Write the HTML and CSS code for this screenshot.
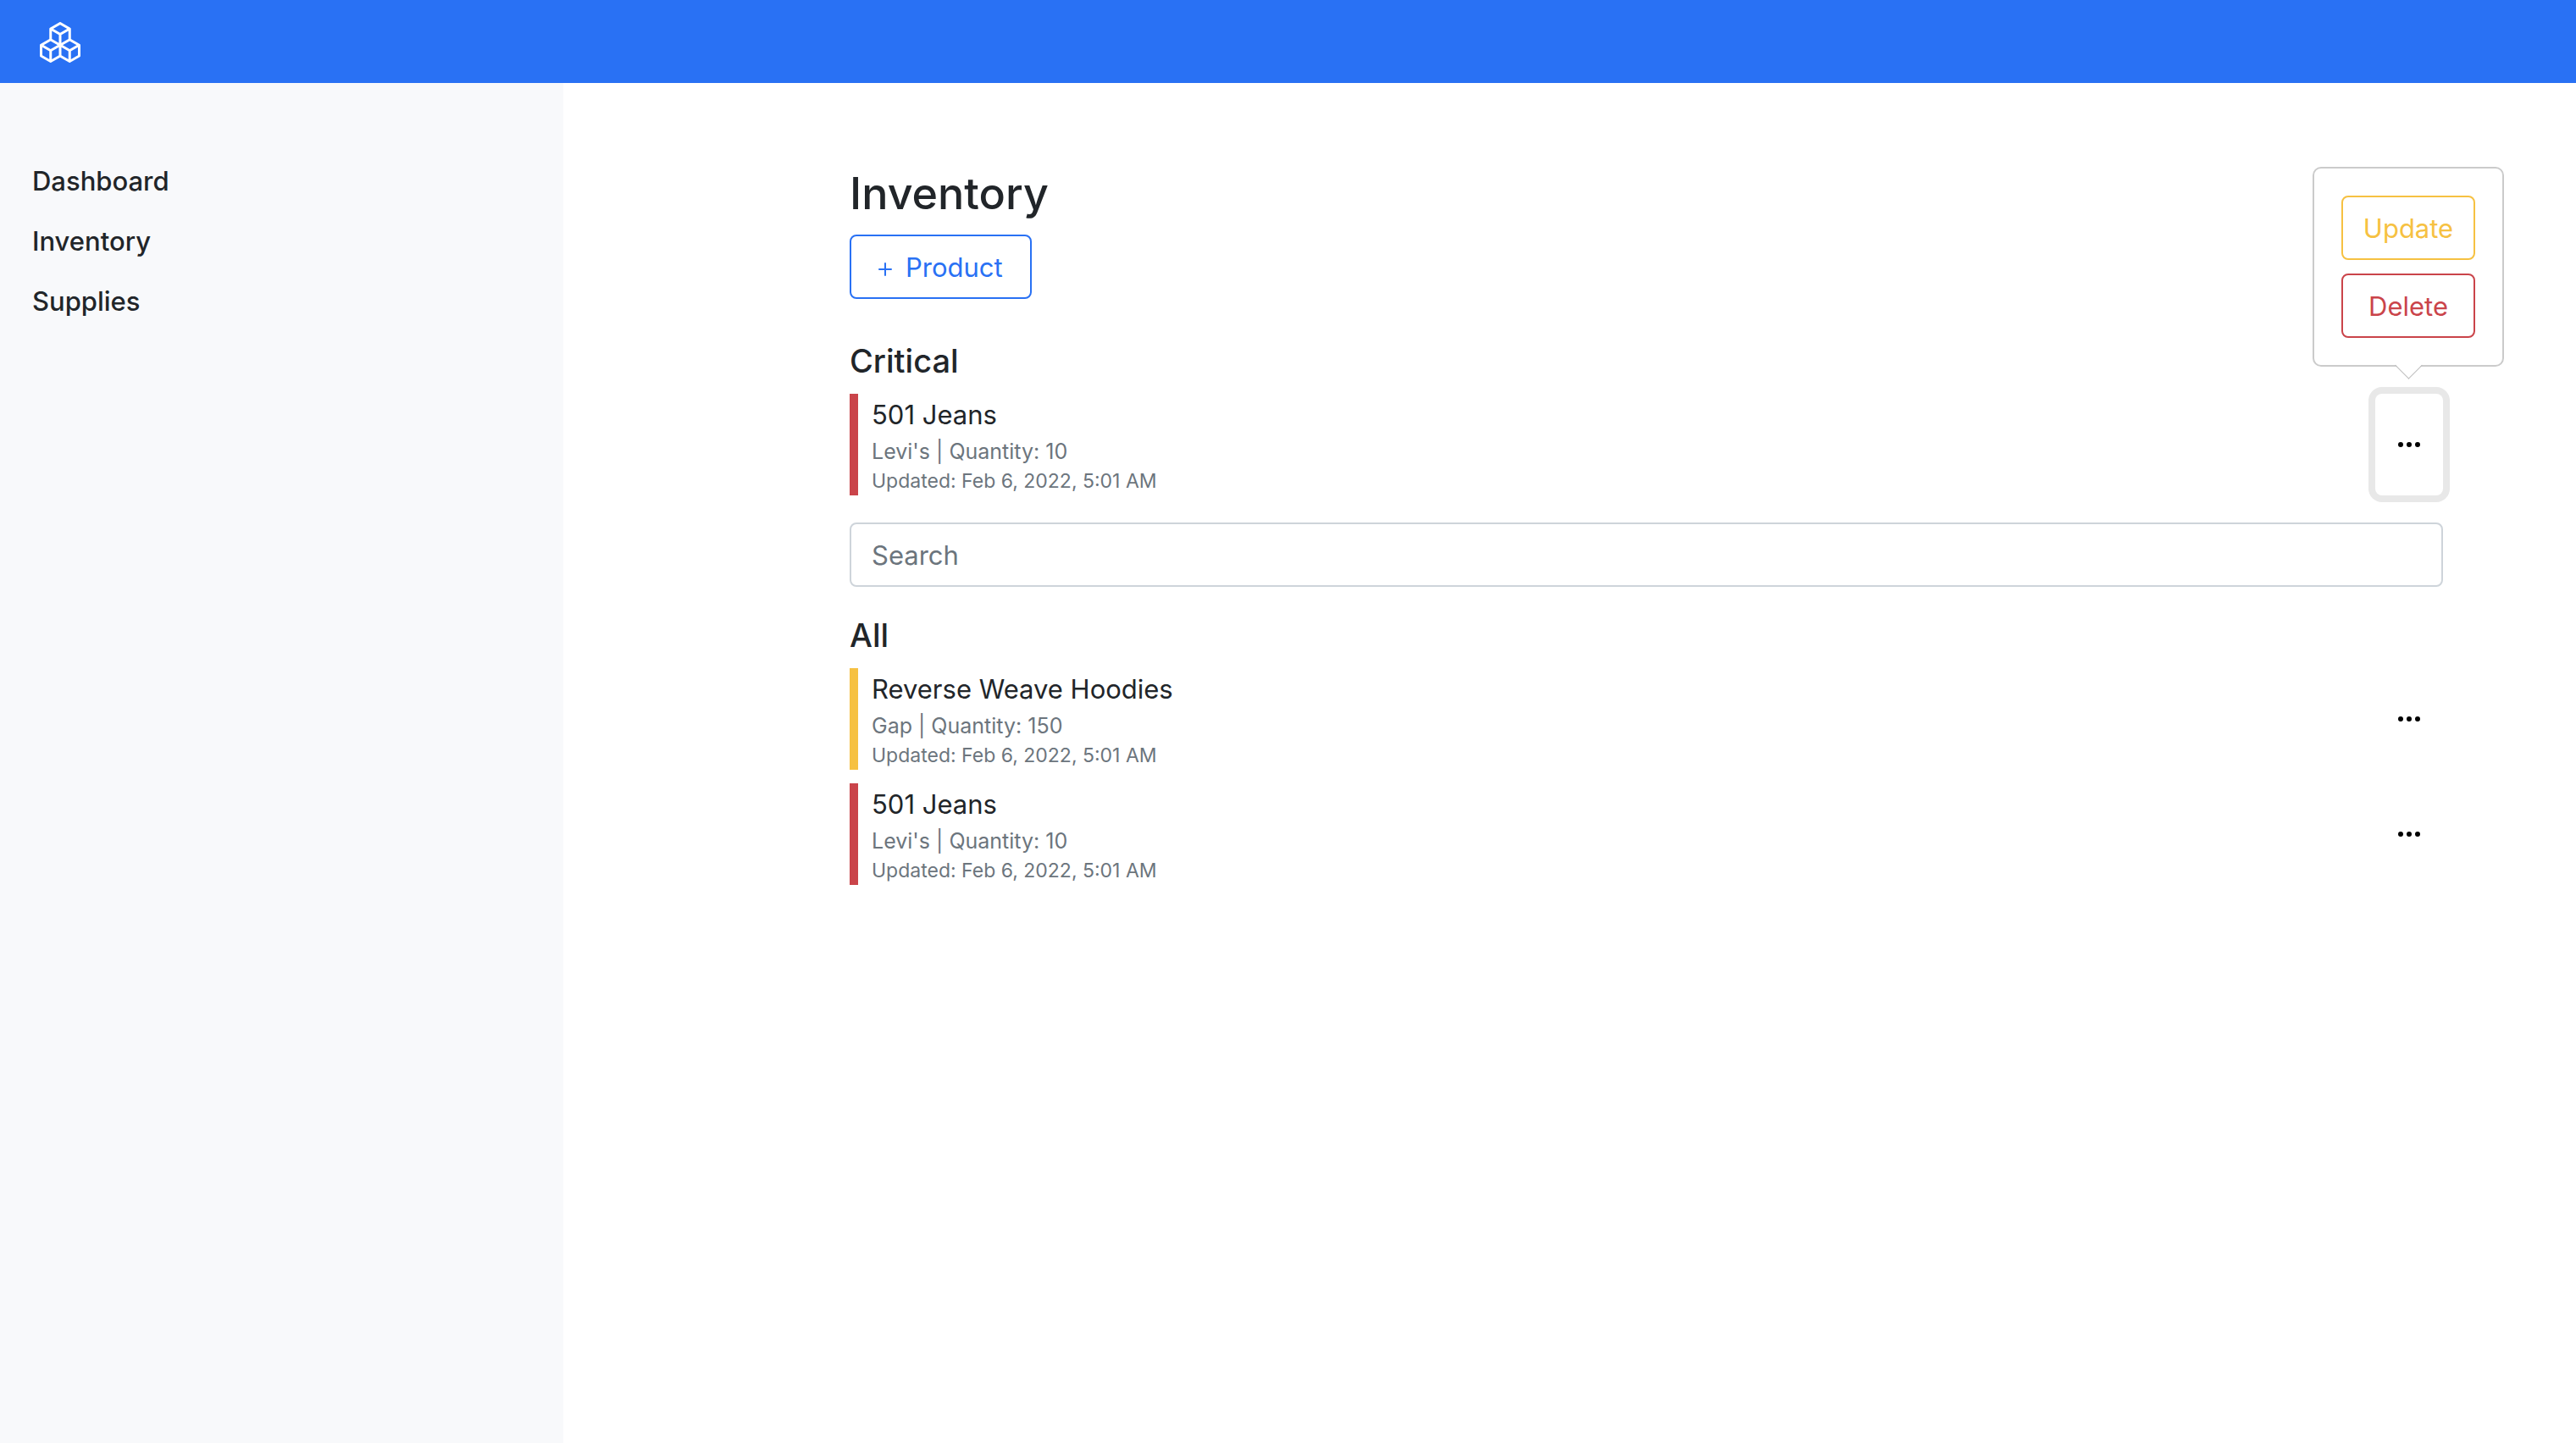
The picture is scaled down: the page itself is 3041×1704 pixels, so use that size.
FILE: index.html
```html
<!DOCTYPE html>
<html lang="en">
<head>
  <meta charset="utf-8">
  <meta name="viewport" content="width=device-width, initial-scale=1">
  <title>Inventory</title>
  <link rel="stylesheet" href="styles.css">
</head>
<body>
  <svg class="sprite" aria-hidden="true">
    <symbol id="boxes" viewBox="0 0 16 16">
      <path d="M7.752.066a.5.5 0 0 1 .496 0l3.75 2.143a.5.5 0 0 1 .252.434v3.995l3.498 2A.5.5 0 0 1 16 9.07v4.286a.5.5 0 0 1-.252.434l-3.75 2.143a.5.5 0 0 1-.496 0l-3.502-2-3.502 2.001a.5.5 0 0 1-.496 0l-3.75-2.143A.5.5 0 0 1 0 13.357V9.071a.5.5 0 0 1 .252-.434L3.75 6.638V2.643a.5.5 0 0 1 .252-.434L7.752.066ZM4.25 7.504 1.508 9.071l2.742 1.567 2.742-1.567L4.25 7.504ZM7.5 9.933l-2.75 1.571v3.134l2.75-1.571V9.933Zm1 3.134 2.75 1.571v-3.134L8.5 9.933v3.134Zm.508-3.996 2.742 1.567 2.742-1.567-2.742-1.567-2.742 1.567Zm2.242-2.433V3.504L8.5 5.076V8.21l2.75-1.572ZM7.5 8.21V5.076L4.75 3.504v3.134L7.5 8.21ZM5.258 2.643 8 4.21l2.742-1.567L8 1.076 5.258 2.643ZM15 9.933l-2.75 1.571v3.134L15 13.067V9.933ZM3.75 14.638v-3.134L1 9.933v3.134l2.75 1.571Z"/>
    </symbol>
    <symbol id="dots" viewBox="0 0 16 16">
      <path d="M3 9.5a1.5 1.5 0 1 1 0-3 1.5 1.5 0 0 1 0 3zm5 0a1.5 1.5 0 1 1 0-3 1.5 1.5 0 0 1 0 3zm5 0a1.5 1.5 0 1 1 0-3 1.5 1.5 0 0 1 0 3z"/>
    </symbol>
    <symbol id="plus" viewBox="0 0 16 16">
      <path d="M8 4a.5.5 0 0 1 .5.5v3h3a.5.5 0 0 1 0 1h-3v3a.5.5 0 0 1-1 0v-3h-3a.5.5 0 0 1 0-1h3v-3A.5.5 0 0 1 8 4z"/>
    </symbol>
  </svg>

  <header class="topbar">
    <a class="brand" href="#" aria-label="Home"><svg class="brand-icon"><use href="#boxes"/></svg></a>
  </header>

  <div class="layout">
    <nav class="sidebar" aria-label="Main">
      <a class="nav-link" href="#">Dashboard</a>
      <a class="nav-link" href="#">Inventory</a>
      <a class="nav-link" href="#">Supplies</a>
    </nav>

    <main class="content">
      <h1 class="page-title">Inventory</h1>
      <button class="btn btn-primary" type="button"><svg class="icon"><use href="#plus"/></svg><span class="btn-label">Product</span></button>

      <section class="group">
        <h2 class="group-title">Critical</h2>
        <ul class="items">
          <li class="item item-danger">
            <div class="item-text">
              <p class="item-name">501 Jeans</p>
              <p class="item-meta">Levi's | Quantity: 10</p>
              <p class="item-date">Updated: Feb 6, 2022, 5:01 AM</p>
            </div>
            <div class="item-menu">
              <button class="menu-btn menu-btn-open" type="button" aria-label="Actions" aria-expanded="true"><svg class="icon"><use href="#dots"/></svg></button>
              <div class="popover">
                <button class="btn btn-warning" type="button">Update</button>
                <button class="btn btn-danger" type="button">Delete</button>
              </div>
            </div>
          </li>
        </ul>
      </section>

      <input class="search" type="search" placeholder="Search" aria-label="Search">

      <section class="group">
        <h2 class="group-title">All</h2>
        <ul class="items">
          <li class="item item-warning">
            <div class="item-text">
              <p class="item-name">Reverse Weave Hoodies</p>
              <p class="item-meta">Gap | Quantity: 150</p>
              <p class="item-date">Updated: Feb 6, 2022, 5:01 AM</p>
            </div>
            <div class="item-menu">
              <button class="menu-btn" type="button" aria-label="Actions"><svg class="icon"><use href="#dots"/></svg></button>
            </div>
          </li>
          <li class="item item-danger">
            <div class="item-text">
              <p class="item-name">501 Jeans</p>
              <p class="item-meta">Levi's | Quantity: 10</p>
              <p class="item-date">Updated: Feb 6, 2022, 5:01 AM</p>
            </div>
            <div class="item-menu">
              <button class="menu-btn" type="button" aria-label="Actions"><svg class="icon"><use href="#dots"/></svg></button>
            </div>
          </li>
        </ul>
      </section>
    </main>
  </div>
</body>
</html>
```

FILE: styles.css
```css
:root {
  --primary: #2971f4;
  --danger: #ca444a;
  --warning: #f6c142;
  --text: #212529;
  --muted: #6c757d;
}

* {
  box-sizing: border-box;
}

body {
  display: flex;
  flex-direction: column;
  min-height: 100vh;
  margin: 0;
  background: #fff;
  color: var(--text);
  font: 400 31px/48px Inter, "Liberation Sans", sans-serif;
}

h1, h2, p, ul {
  margin: 0;
  padding: 0;
}

button, input {
  font: inherit;
}

svg {
  display: block;
  fill: currentColor;
}

.sprite {
  position: absolute;
  width: 0;
  height: 0;
}

.icon {
  width: 32px;
  height: 32px;
}

/* Top bar */
.topbar {
  padding: 26px 47px 24px;
  background: var(--primary);
}

.brand {
  display: inline-block;
  color: #fff;
  vertical-align: top;
}

.brand-icon {
  width: 48px;
  height: 48px;
}

/* Sidebar, gutter, content, gutter */
.layout {
  flex: 1;
  display: grid;
  grid-template-columns: 665fr 338fr 1881fr 157fr;
}

.sidebar {
  display: flex;
  flex-direction: column;
  gap: 23px;
  padding: 92px 38px;
  background: #f8f9fb;
}

.nav-link {
  color: inherit;
  font-weight: 500;
  text-decoration: none;
}

.content {
  grid-column: 3;
  display: flex;
  flex-direction: column;
  align-items: stretch;
  min-width: 0;
  padding: 96px 0;
}

.page-title {
  margin-bottom: 13px;
  font-size: 52px;
  font-weight: 500;
  line-height: 70px;
}

/* Buttons */
.btn {
  display: flex;
  align-items: center;
  justify-content: center;
  padding: 13px 24px 11px;
  border: 2px solid currentColor;
  border-radius: 8px;
  background: transparent;
}

.btn .icon {
  margin-top: 4px;
}

.btn-primary {
  align-self: flex-start;
  margin-bottom: 48px;
  color: var(--primary);
}

.btn-label {
  margin: 0 8px;
}

.btn-warning {
  color: var(--warning);
}

.btn-danger {
  color: var(--danger);
}

/* Product lists */
.group-title {
  margin-bottom: 14px;
  font-size: 38px;
  font-weight: 500;
  line-height: 50px;
}

.items {
  display: flex;
  flex-direction: column;
  gap: 16px;
  list-style: none;
}

.item {
  display: flex;
  justify-content: space-between;
  border-left: 10px solid;
}

.item-danger {
  border-color: var(--danger);
}

.item-warning {
  border-color: var(--warning);
}

.item-text {
  padding-left: 16px;
}

.item-name {
  line-height: 50px;
}

.item-meta {
  color: var(--muted);
  font-size: 25px;
  line-height: 36px;
}

.item-date {
  color: var(--muted);
  font-size: 23px;
  line-height: 34px;
}

.item-menu {
  position: relative;
  display: flex;
}

.menu-btn {
  padding: 12px 24px;
  border: 0;
  border-radius: 8px;
  background: transparent;
  color: #000;
}

.menu-btn-open {
  box-shadow: 0 0 0 8px #e8e8e8;
}

/* Action popover above an open menu button */
.popover {
  position: absolute;
  bottom: calc(100% + 32px);
  left: 50%;
  display: flex;
  flex-direction: column;
  gap: 16px;
  width: 226px;
  margin-left: -114px;
  padding: 32px;
  border: 2px solid #cbcbcb;
  border-radius: 10px;
  background: #fff;
}

.popover::after {
  content: "";
  position: absolute;
  bottom: -12px;
  left: calc(50% - 11px);
  width: 22px;
  height: 22px;
  border: solid #bfbfbf;
  border-width: 0 1px 1px 0;
  background: linear-gradient(135deg, transparent 50%, #fff 50%);
  transform: rotate(45deg);
}

.search {
  width: 100%;
  margin: 32px 0;
  padding: 13px 24px 11px;
  border: 2px solid #ced4da;
  border-radius: 8px;
  background: #fff;
  color: inherit;
  appearance: none;
}

.search::placeholder {
  color: var(--muted);
  opacity: 1;
}
```
